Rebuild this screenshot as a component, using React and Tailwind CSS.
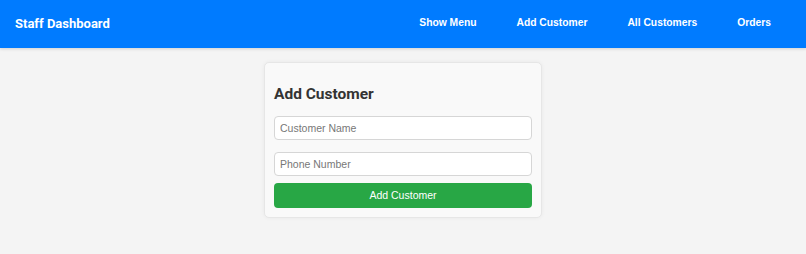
export default function App() {
  return (
    <div className="min-h-[254px] bg-[#f4f4f4] font-['Liberation_Sans',Arial,sans-serif]">
      <header className="flex h-[48px] items-center justify-between bg-[#007bff] pl-[15px] pr-[35px] shadow-[0_1px_3px_rgba(0,0,0,0.15)]">
        <h1 className="font-['Roboto',sans-serif] text-[13px] font-bold text-white">Staff Dashboard</h1>
        <nav className="-mt-[2px] flex gap-[40px] text-[10.3px] font-bold text-white">
          <a href="#">Show Menu</a>
          <a href="#">Add Customer</a>
          <a href="#">All Customers</a>
          <a href="#">Orders</a>
        </nav>
      </header>

      <main className="flex justify-center pt-[14px]">
        <div className="w-[278px] rounded-[5px] border border-[#e6e6e6] bg-[#f9f9f9] px-[9px] pt-[10px] pb-[9px] shadow-[0_0_4px_rgba(0,0,0,0.05)]">
          <h2 className="my-[11px] font-['Roboto',sans-serif] text-[15.5px] leading-[21px] font-bold text-[#333]">
            Add Customer
          </h2>
          <input
            type="text"
            placeholder="Customer Name"
            className="block h-[24px] w-full rounded-[4px] border border-[#d6d6d6] bg-white px-[5px] text-[10.5px] placeholder:text-[#777] outline-none"
          />
          <input
            type="text"
            placeholder="Phone Number"
            className="mt-[12px] block h-[24px] w-full rounded-[4px] border border-[#d6d6d6] bg-white px-[5px] text-[10.5px] placeholder:text-[#777] outline-none"
          />
          <button className="mt-[7px] block h-[25px] w-full rounded-[4px] bg-[#28a745] text-[10.5px] text-white">
            Add Customer
          </button>
        </div>
      </main>
    </div>
  )
}
